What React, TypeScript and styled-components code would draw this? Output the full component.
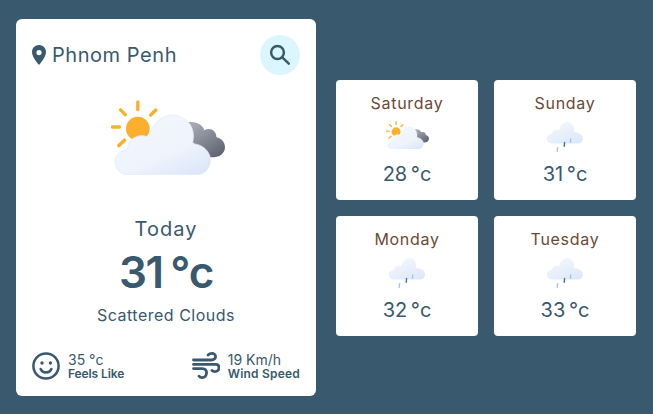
import React from "react";
import styled, { createGlobalStyle } from "styled-components";

const GlobalStyle = createGlobalStyle`
  html, body {
    margin: 0;
    padding: 0;
    background: #38596e;
  }
  * {
    box-sizing: border-box;
  }
`;

const forecast = [
  { day: "Saturday", temp: "28 °c", icon: "sun" },
  { day: "Sunday", temp: "31 °c", icon: "rain" },
  { day: "Monday", temp: "32 °c", icon: "rain" },
  { day: "Tuesday", temp: "33 °c", icon: "rain" },
];

const CloudySun = ({ id, width }: { id: string; width: number }) => (
  <svg width={width} height={width * 0.661} viewBox="11 10 113.5 75" style={{ display: "block" }}>
    <defs>
      <linearGradient id={`${id}-white`} x1="0.3" y1="0.2" x2="0.85" y2="1">
        <stop offset="0" stopColor="#f2f6fd" />
        <stop offset="0.55" stopColor="#eef3fc" />
        <stop offset="1" stopColor="#dbe7f8" />
      </linearGradient>
      <linearGradient id={`${id}-grey`} x1="0.2" y1="0.1" x2="0.85" y2="1">
        <stop offset="0" stopColor="#a3a8b2" />
        <stop offset="1" stopColor="#5e626e" />
      </linearGradient>
    </defs>
    <g stroke="#fbb02d" strokeWidth="3.4" strokeLinecap="round">
      <line x1="37.7" y1="12" x2="37.7" y2="19.5" />
      <line x1="20.5" y1="19.8" x2="25.2" y2="24.6" />
      <line x1="50.5" y1="25" x2="55.6" y2="20" />
      <line x1="12.5" y1="36.8" x2="19.5" y2="36.8" />
      <line x1="18.8" y1="55.4" x2="24.5" y2="50" />
    </g>
    <circle cx="37.7" cy="38.5" r="11.8" fill="#fbb02d" />
    <path
      d="M88 32 C95 31 102 34 104 40 C110 37 116 41 116 47 C121 48 124.5 52 124.5 57 C124.5 63 119 67 113 67 L104 67 L85 42 Z"
      fill={`url(#${id}-grey)`}
    />
    <path
      d="M28 84.5 C20 84.5 15 78 15 71.5 C15 65 20 60 27.5 59.5 C27 52 33 46 41 45.5 C44 45.5 46 46 48.5 47 C52 33 62 25 72 25 C84 25 93.5 35 93 46 C93 49 92.5 51 92 53.5 C102 54 110 61 110 70 C110 78 104 84.5 96 84.5 Z"
      fill={`url(#${id}-white)`}
      stroke="#e3ebf8"
      strokeWidth="0.8"
    />
  </svg>
);

const RainCloud = ({ id }: { id: string }) => (
  <svg width="36" height="32" viewBox="0 0 36 32" style={{ display: "block" }}>
    <defs>
      <linearGradient id={id} x1="0.25" y1="0.1" x2="0.85" y2="1">
        <stop offset="0" stopColor="#f2f6fd" />
        <stop offset="1" stopColor="#dde8f9" />
      </linearGradient>
    </defs>
    <path
      d="M5 22.6 C2 22.6 0 20.2 0 17.6 C0 15 2 13 5 12.8 C5 10.4 7 8.6 9.6 8.6 C10.6 8.6 11.4 8.8 12 9.1 C13.2 4.4 16.4 1 20 1 C24 1 27 4.4 27 8.6 C27 9.8 26.9 10.4 26.6 11.2 C31.6 11 36 13.4 36 17.4 C36 20.4 33.6 22.6 30.6 22.6 Z"
      fill={`url(#${id})`}
    />
    <g strokeWidth="1.4" strokeLinecap="round">
      <line x1="23.8" y1="18" x2="23.4" y2="21.4" stroke="#a9c3ec" />
      <line x1="17.6" y1="21.4" x2="17.2" y2="25.2" stroke="#3a6fcc" />
      <line x1="10.6" y1="26.6" x2="10.2" y2="30.4" stroke="#a9c3ec" />
    </g>
  </svg>
);

const PinIcon = () => (
  <svg width="14" height="20" viewBox="0 0 14 20">
    <path
      fillRule="evenodd"
      d="M7 0 C3.1 0 0 3.1 0 7 C0 11.5 4.4 16.8 7 20 C9.6 16.8 14 11.5 14 7 C14 3.1 10.9 0 7 0 Z M7 5 A2.6 2.6 0 1 1 7 10.2 A2.6 2.6 0 1 1 7 5 Z"
      fill="#38596e"
    />
  </svg>
);

const SearchIcon = () => (
  <svg width="22" height="22" viewBox="0 0 22 22" fill="none" stroke="#38596e" strokeWidth="2.5" strokeLinecap="round">
    <circle cx="8.5" cy="8.5" r="6.4" />
    <line x1="13.3" y1="13.3" x2="19.8" y2="19.6" />
  </svg>
);

const SmileIcon = () => (
  <svg width="28" height="28" viewBox="0 0 28 28" fill="none" stroke="#38596e" strokeWidth="2.5" strokeLinecap="round">
    <circle cx="14" cy="14" r="12.6" />
    <path d="M8.6 17 C10.4 21.6 17.6 21.6 19.4 17" />
    <circle cx="10" cy="11" r="1.7" fill="#38596e" stroke="none" />
    <circle cx="18.4" cy="11" r="1.7" fill="#38596e" stroke="none" />
  </svg>
);

const WindIcon = () => (
  <svg width="28" height="28" viewBox="0 0 28 28" fill="none" stroke="#38596e" strokeWidth="2.8" strokeLinecap="round">
    <path d="M1.5 8 H19.5 C22 8 23.6 6.4 23.6 4.6 C23.6 2.6 21.8 1.4 20 1.4 C18.4 1.4 17 2 16 3" />
    <path d="M1.5 12.4 H24 C26 12.4 27 14 27 15.8 C27 18 25.2 19.6 23 19.6 C21.8 19.6 20.6 19.2 20 18.6" />
    <path d="M1.5 16.6 H10.5 C13 16.6 14.6 18.4 14.6 20.6 C14.6 23.6 12.6 25.6 10 25.6 C8.8 25.6 7.6 25 7 24.2" />
  </svg>
);

const App = () => {
  return (
    <>
      <GlobalStyle />
      <Page>
        <TodayCard>
          <Header>
            <Location>
              <PinIcon />
              <City>Phnom Penh</City>
            </Location>
            <SearchButton>
              <SearchIcon />
            </SearchButton>
          </Header>
          <HeroIcon>
            <CloudySun id="hero" width={114} />
          </HeroIcon>
          <TodayLabel>Today</TodayLabel>
          <TodayTemp>31 °c</TodayTemp>
          <Summary>Scattered Clouds</Summary>
          <Stats>
            <Stat>
              <SmileIcon />
              <StatText>
                <StatValue>35 °c</StatValue>
                <StatLabel $spacing={-0.1}>Feels Like</StatLabel>
              </StatText>
            </Stat>
            <Stat>
              <WindIcon />
              <StatText>
                <StatValue>19 Km/h</StatValue>
                <StatLabel $spacing={0.2}>Wind Speed</StatLabel>
              </StatText>
            </Stat>
          </Stats>
        </TodayCard>
        <ForecastGrid>
          {forecast.map((item) => (
            <DayCard key={item.day}>
              <DayName>{item.day}</DayName>
              <DayIcon>
                {item.icon === "sun" ? <CloudySun id={item.day} width={43} /> : <RainCloud id={item.day} />}
              </DayIcon>
              <DayTemp>{item.temp}</DayTemp>
            </DayCard>
          ))}
        </ForecastGrid>
      </Page>
    </>
  );
};

export default App;

const Page = styled.div`
  width: 653px;
  height: 414px;
  padding: 19px 17px 18px 16px;
  display: flex;
  align-items: center;
  gap: 20px;
  background: #38596e;
  font-family: "Inter", "Liberation Sans", sans-serif;
  color: #38596e;
`;

const TodayCard = styled.div`
  width: 300px;
  height: 377px;
  padding: 16px;
  background: #fff;
  border-radius: 6px;
  display: flex;
  flex-direction: column;
  align-items: center;
`;

const Header = styled.div`
  width: 100%;
  display: flex;
  justify-content: space-between;
  align-items: center;
`;

const Location = styled.div`
  display: flex;
  align-items: center;
  gap: 6px;
`;

const City = styled.span`
  font-size: 20px;
  line-height: 30px;
  letter-spacing: 0.55px;
`;

const SearchButton = styled.div`
  width: 40px;
  height: 40px;
  border-radius: 50%;
  background: #dcf6ff;
  display: flex;
  align-items: center;
  justify-content: center;
`;

const HeroIcon = styled.div`
  margin: 25px 0 0 3px;
`;

const TodayLabel = styled.div`
  margin-top: 39px;
  font-size: 20px;
  line-height: 30px;
  letter-spacing: 1px;
`;

const TodayTemp = styled.div`
  font-size: 44px;
  line-height: 50px;
  font-weight: 600;
  margin-top: 3px;
  letter-spacing: -1.5px;
  word-spacing: -2px;
`;

const Summary = styled.div`
  margin-top: 6px;
  font-size: 16px;
  line-height: 24px;
  letter-spacing: 0.5px;
`;

const Stats = styled.div`
  width: 100%;
  margin-top: auto;
  display: flex;
  justify-content: space-between;
  align-items: center;
`;

const Stat = styled.div`
  display: flex;
  align-items: center;
  gap: 8px;
`;

const StatText = styled.div`
  display: flex;
  flex-direction: column;
`;

const StatValue = styled.span`
  font-size: 14px;
  line-height: 14px;
`;

const StatLabel = styled.span<{ $spacing: number }>`
  font-size: 12px;
  line-height: 13px;
  font-weight: 600;
  letter-spacing: ${(props) => props.$spacing}px;
`;

const ForecastGrid = styled.div`
  display: grid;
  grid-template-columns: 142px 142px;
  grid-auto-rows: 120px;
  gap: 16px;
`;

const DayCard = styled.div`
  background: #fff;
  border-radius: 4px;
  padding-top: 11px;
  display: flex;
  flex-direction: column;
  align-items: center;
`;

const DayName = styled.div`
  font-size: 16px;
  line-height: 24px;
  letter-spacing: 0.7px;
  color: #6b4a35;
`;

const DayIcon = styled.div`
  height: 32px;
  margin-top: 6px;
  display: flex;
  justify-content: center;
  align-items: flex-start;
`;

const DayTemp = styled.div`
  margin-top: 6px;
  font-size: 20px;
  line-height: 30px;
  word-spacing: -2px;
`;
